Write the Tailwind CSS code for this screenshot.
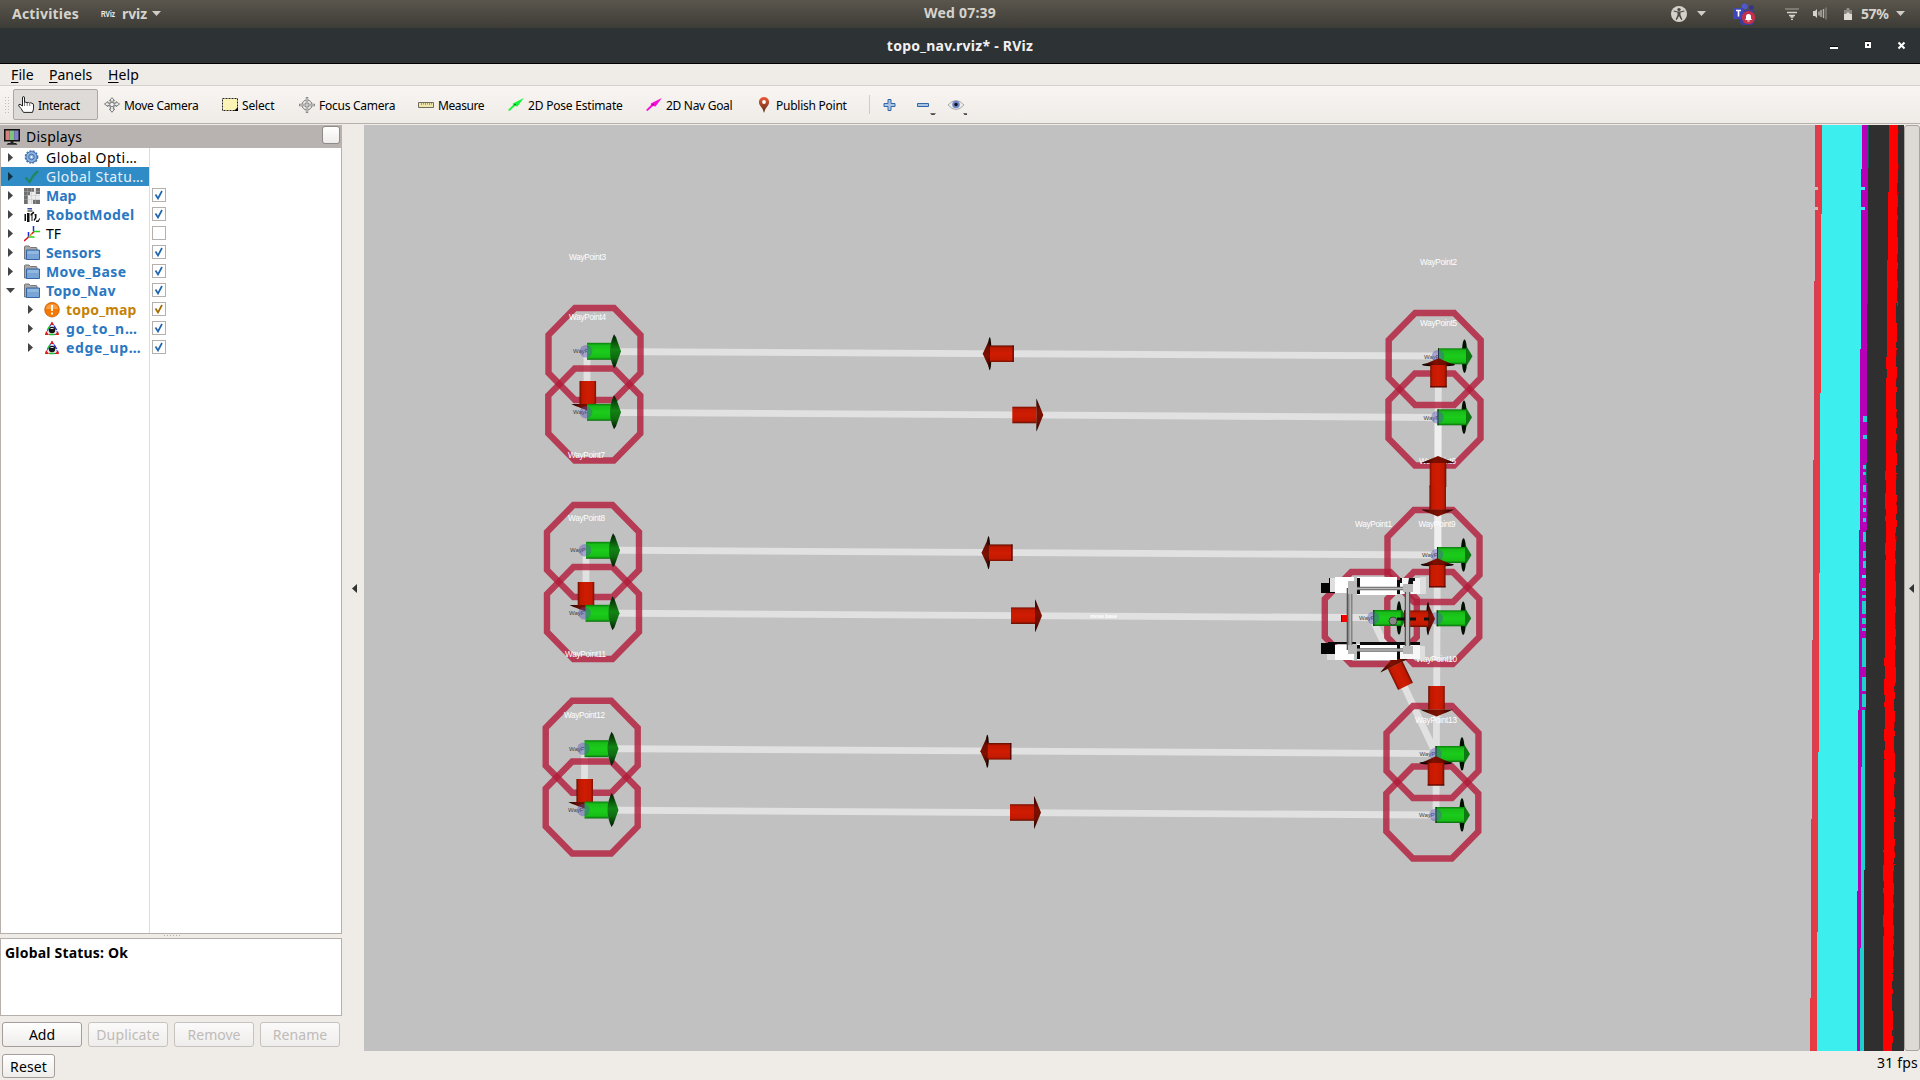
<!DOCTYPE html>
<html lang="en">
<head>
<meta charset="utf-8">
<title>topo_nav.rviz* - RViz</title>
<script src="https://cdn.jsdelivr.net/npm/@tailwindcss/browser@4"></script>
</head>
<body class="flex h-[1080px] w-[1920px] flex-col overflow-hidden bg-[#efebe7] font-['Noto_Sans',sans-serif] text-[14px] leading-none whitespace-nowrap text-black">

<!-- Desktop top bar -->
<header class="grid h-7 shrink-0 grid-cols-3 items-center bg-linear-to-b from-[#5a564d] to-[#3e3c37] text-[14px] font-bold text-[#d6d3cc]">
  <div class="flex h-7 items-center pb-px pl-3">
    <span class="w-[88px] tracking-[0.2px]">Activities</span>
    <svg class="h-3 w-[17px]" viewBox="0 0 17 12"><text x="1" y="9" font-size="9" font-family="Liberation Sans" font-weight="bold" fill="#eee" textLength="14" lengthAdjust="spacingAndGlyphs">RViz</text></svg>
    <span class="ml-[5px] w-[30px] tracking-[-0.1px]">rviz</span>
    <svg class="h-[5px] w-[9px]" viewBox="0 0 9 5"><path d="M0 0h9L4.500 5z" fill="#d0cdc6"/></svg>
  </div>
  <div class="pb-[2px] text-center tracking-[0.2px]">Wed 07:39</div>
  <div class="flex h-7 items-center justify-end pr-[15px] pb-px">
    <svg class="size-4" viewBox="0 0 16 16"><circle cx="8" cy="8" r="8" fill="#d4d1cb"/><circle cx="8" cy="3.600" r="1.700" fill="#4c4a44"/><path d="M2.500 5.500l4 .9v2.600L4.600 13.600l1.200.5L8 10l2.200 4.100 1.200-.5L9.500 9V6.400l4-.9-.2-1L9 5.600H7l-4.300-1.100z" fill="#4c4a44"/></svg>
    <svg class="ml-[10px] h-[5px] w-[9px]" viewBox="0 0 9 5"><path d="M0 0h9L4.500 5z" fill="#d0cdc6"/></svg>
    <svg class="ml-[27px] h-[22px] w-[23px]" viewBox="0 0 23 22"><circle cx="11.500" cy="3.500" r="3" fill="#5059c9"/><circle cx="18.500" cy="4.500" r="2.200" fill="#34348f"/><path d="M7 7h14v7a7 7 0 0 1-14 5z" fill="#3b3f9c"/><rect y="5" width="11" height="11" rx="1" fill="#4046b8"/><path d="M3 7.500h5M5.500 7.500v6" stroke="#fff" stroke-width="1.600"/><circle cx="15.500" cy="14.500" r="6.600" fill="#c4314b"/><path d="M12 17l1-1.500v-2a2.500 2.500 0 0 1 5 0v2l1 1.500zM14.300 17.500h2.400v1h-2.400z" fill="#fff"/></svg>
    <svg class="ml-[29px] h-3 w-[14px]" viewBox="0 0 14 12"><path d="M0 1h14" stroke="#8b8880" stroke-width="1.500"/><path d="M2 4.500h10M4 7.500h6M5.500 9h3M6 11.300h2" stroke="#d6d3cc" stroke-width="1.300"/></svg>
    <svg class="ml-[14px] h-[13px] w-[14px]" viewBox="0 0 14 13"><path d="M0 4h2l2-2v9l-2-2H0z" fill="#d6d3cc"/><path d="M6 4.500v4M8 3v7M10.500 2v9" stroke="#b5b2ab" stroke-width="1.400"/><path d="M13 .5v12" stroke="#999690"/></svg>
    <svg class="ml-[17px] h-3 w-2" viewBox="0 0 8 12"><path d="M2.500 0h3v2H8v4H0V2h2.500z" fill="#8e8b84"/><path d="M0 6h2l2-2 2 2h2v6H0z" fill="#dedbd5"/></svg>
    <span class="ml-[9px] w-[35px] tracking-[-0.4px]">57%</span>
    <svg class="h-[5px] w-[9px]" viewBox="0 0 9 5"><path d="M0 0h9L4.500 5z" fill="#d0cdc6"/></svg>
  </div>
</header>

<!-- Window title bar -->
<div class="grid h-9 shrink-0 grid-cols-3 items-center border-b border-black bg-[#2d3235] font-bold text-[#f1f1f1]">
  <span></span>
  <span class="text-center text-[14px] tracking-[0.25px]">topo_nav.rviz* - RViz</span>
  <svg class="mr-[14px] h-[9px] w-[76px] justify-self-end" viewBox="0 0 76 9" shape-rendering="crispEdges"><path d="M0 6h8v2H0z" fill="#fff"/><path d="M0 5h8v1H0zM35 0h6v1h-6z" fill="#0b0c0d"/><path d="M35 1h6v6h-6zm2 2v2h2V3z" fill="#fff" fill-rule="evenodd"/><path d="M68.500 1.500l6 6M74.500 1.500l-6 6" stroke="#fff" stroke-width="2" shape-rendering="auto"/></svg>
</div>

<!-- Menu -->
<nav class="flex h-[22px] shrink-0 items-center border-b border-[#d5d1cd] pl-[11px] text-[14px]">
  <span class="w-[38px] tracking-[0.1px]"><u class="underline-offset-2">F</u>ile</span>
  <span class="w-[59px] tracking-[0px]"><u class="underline-offset-2">P</u>anels</span>
  <span class="tracking-[0.15px]"><u class="underline-offset-2">H</u>elp</span>
</nav>

<!-- Toolbar -->
<div class="flex h-[38px] shrink-0 items-center border-b border-[#b5b0ac] bg-linear-to-b from-[#f8f5f2] to-[#efebe7] text-[12px]">
  <svg class="ml-1 h-[18px] w-[9px]" viewBox="0 0 9 18"><path d="M1.500 1v17M4.500 1v17" stroke="#c2beba" stroke-dasharray="1 2"/></svg>
  <div class="flex h-[31px] w-[85px] items-center rounded-[2px] border border-[#aca7a4] bg-[#dddad7] pl-1">
    <svg class="mr-[4px] h-[17px] w-4" viewBox="0 0 16 17"><path d="M4.500 10V2q0-1.500 1-1.500t1 1.500v4.500q1.500-1 2.500.3 1.500-1 2.500.3 1.500-1 2.500.3 1.500 0 1.500 1.500v4l-1 3.500h-9L3 12.500.8 10Q.2 8.300 2 8.300z" fill="#fff" stroke="#222"/><path d="M6.500 6.500V10M9.200 7v3M11.700 7.500V10" stroke="#555" stroke-width=".8"/></svg>
    <span class="pt-[2px] tracking-[-0.3px]">Interact</span>
  </div>
  <div class="ml-[6px] flex w-[118px] items-center">
    <svg class="mr-1 size-4" viewBox="0 0 16 16" fill="#eee" stroke="#6d6d6d" stroke-width=".9"><path d="M8 .7l2.600 3H9v2.500h3V4.600L15.500 7 12 9.600V8.200L10 9l-.8 3h1.500L8 15.300 5.300 12h1.500L6 9l-2-.8v1.400L.5 7 4 4.600v1.600h3V3.700H5.400z"/><circle cx="8" cy="7.500" r="2.300"/></svg>
    <span class="pt-[2px] tracking-[-0.3px]">Move Camera</span>
  </div>
  <div class="flex w-[77px] items-center">
    <svg class="mr-1 h-[13px] w-4" viewBox="0 0 16 13"><path d="M.5.5h15v12H.5z" fill="#fcf4b4" stroke="#222" stroke-dasharray="2 1"/><path d="M16 9v4h-4z"/></svg>
    <span class="pt-[2px] tracking-[-0.15px]">Select</span>
  </div>
  <div class="flex w-[119px] items-center">
    <svg class="mr-1 size-4" viewBox="0 0 16 16" fill="none" stroke="#777"><circle cx="8" cy="8" r="5"/><circle cx="8" cy="8" r="2.200"/><path d="M8 0v16M0 8h16" stroke="#888" stroke-width="2.400"/><path d="M8 1v14M1 8h14" stroke="#eee" stroke-width=".8"/></svg>
    <span class="pt-[2px] tracking-[-0.25px]">Focus Camera</span>
  </div>
  <div class="flex w-[90px] items-center">
    <svg class="mr-1 h-[6px] w-4" viewBox="0 0 16 6"><path d="M.5.5h15v5H.5z" fill="#f0e5ac" stroke="#6f6b5e"/><path d="M3.500 1v2M5.500 1v1.500M7.500 1v2M9.500 1v1.500M11.500 1v2M13.500 1v1.500" stroke="#8a8468" stroke-width=".8"/></svg>
    <span class="pt-[2px] tracking-[-0.4px]">Measure</span>
  </div>
  <div class="flex w-[138px] items-center">
    <svg class="mr-1 h-[13px] w-4" viewBox="0 0 16 13"><path d="M0 12L5 7l-.2-1.500L15.800 0 9.500 8.500 7 8 1.500 13z" fill="#18f43c"/><path d="M6 7l2-.7" stroke="#08781c"/></svg>
    <span class="pt-[2px] tracking-[-0.2px]">2D Pose Estimate</span>
  </div>
  <div class="flex w-[112px] items-center">
    <svg class="mr-1 h-[13px] w-4" viewBox="0 0 16 13"><path d="M0 12L5 7l-.2-1.500L15.800 0 9.500 8.500 7 8 1.500 13z" fill="#fb08da"/><path d="M6 7l2-.7" stroke="#8c0878"/></svg>
    <span class="pt-[2px] tracking-[-0.3px]">2D Nav Goal</span>
  </div>
  <div class="flex w-[111px] items-center">
    <svg class="mr-[6px] h-4 w-3" viewBox="0 0 12 16"><defs><linearGradient id="pin" x2="0" y2="1"><stop stop-color="#ee5a38"/><stop offset="1" stop-color="#4f2e16"/></linearGradient></defs><path d="M6 16Q5 11.500 2.200 8.800.9 7 .9 5a5.100 5 0 0 1 10.200 0q0 2-1.300 3.800Q7 11.500 6 16z" fill="url(#pin)"/><circle cx="6" cy="5" r="1.900" fill="#fff"/></svg>
    <span class="pt-[2px] tracking-[-0.25px]">Publish Point</span>
  </div>
  <div class="h-[19px] w-[14px] border-l border-[#cfcbc7]"></div>
  <svg class="h-5 w-[84px]" viewBox="0 0 84 20"><path d="M5 4.500h3v4h4v3H8v4H5v-4H1v-3h4z" fill="#a9c5e6" stroke="#3465a4"/><path d="M34.500 8.500h11v3h-11z" fill="#a9c5e6" stroke="#3465a4"/><path d="M47 18h6l-3 3zM80 18h6l-3 3z" fill="#444" transform="translate(0 .3)"/><path d="M65 10q8-9 16 0-8 9-16 0z" fill="#eee" stroke="#aaa"/><circle cx="73" cy="9.500" r="3.800" fill="#6d87c6"/><circle cx="73" cy="9.500" r="1.700" fill="#111"/></svg>
</div>

<main class="flex h-[927px] shrink-0 pt-px">
  <!-- Displays panel -->
  <aside class="flex w-[342px] shrink-0 flex-col">
    <div class="flex h-[23px] shrink-0 items-center bg-[#b8b3b0] pr-[2px] pl-1">
      <svg class="mr-[6px] h-4 w-4" viewBox="0 0 16 16"><path d="M0 0h16v12.500H0z" fill="#111"/><path d="M1.500 1.500h4.300V11H1.500z" fill="#d58080"/><path d="M5.800 1.500h4.400V11H5.800z" fill="#7cc380"/><path d="M10.200 1.500h4.300V11h-4.300z" fill="#8480c8"/><path d="M6.500 12h3v2h2.500l1.500 1.800h-11L4 14h2.500z" fill="#222"/></svg>
      <span class="tracking-[0.2px]">Displays</span>
      <span class="mb-[3px] ml-auto size-[18px] rounded-[3px] border border-[#8f8a87] bg-linear-to-b from-white to-[#efedeb]"></span>
    </div>
    <div id="tree" class="h-[786px] shrink-0 border border-t-0 border-[#b5b0ac] bg-[linear-gradient(to_right,white_148px,#dcdcdc_148px,#dcdcdc_149px,white_149px)]"></div>
    <svg class="h-1 w-[342px] shrink-0" viewBox="0 0 342 4"><path d="M164 1.500h17" stroke="#b5b0ac" stroke-dasharray="1 2"/></svg>
    <div class="h-[78px] shrink-0 border border-[#b5b0ac] bg-white px-1 pt-[7px] text-[14px] font-bold tracking-[0.2px]">Global Status: Ok</div>
    <div class="flex gap-[6px] pt-[6px] pl-[2px] text-[14px] text-[#bebbb8]">
      <span class="flex h-[25px] w-20 items-center justify-center rounded-[3px] border border-[#a39e9a] bg-linear-to-b from-white to-[#efedeb] text-black">Add</span>
      <span class="flex h-[25px] w-20 items-center justify-center rounded-[3px] border border-[#c6c2be] bg-linear-to-b from-[#fbfafa] to-[#efedeb] tracking-[0.15px]">Duplicate</span>
      <span class="flex h-[25px] w-20 items-center justify-center rounded-[3px] border border-[#c6c2be] bg-linear-to-b from-[#fbfafa] to-[#efedeb]">Remove</span>
      <span class="flex h-[25px] w-20 items-center justify-center rounded-[3px] border border-[#c6c2be] bg-linear-to-b from-[#fbfafa] to-[#efedeb] tracking-[0.1px]">Rename</span>
    </div>
  </aside>
  <div class="flex w-[22px] shrink-0 items-center justify-center pl-[3px]"><svg class="h-[9px] w-[5px]" viewBox="0 0 5 9"><path d="M5 0v9L0 4.500z" fill="#333"/></svg></div>

  <!-- 3D view, drawn in window coordinates -->
  <svg class="h-[926px] w-[1540px] shrink-0" viewBox="364 125 1540 926">
    <defs>
      <path id="oct" d="M-19.500-46h39l26.500 27v38l-26.500 27h-39l-26.500-27v-38z" fill="none" stroke="#b21a38" stroke-opacity=".8" stroke-width="6.400"/>
      <linearGradient id="gb" x2="0" y2="1"><stop stop-color="#0b7d0d"/><stop offset=".15" stop-color="#19bd19"/><stop offset=".5" stop-color="#1bcc1b"/><stop offset=".85" stop-color="#17be17"/><stop offset="1" stop-color="#0a6a0c"/></linearGradient>
      <linearGradient id="rb" x2="0" y2="1"><stop stop-color="#7a1000"/><stop offset=".15" stop-color="#c41a02"/><stop offset=".5" stop-color="#cf1c02"/><stop offset=".85" stop-color="#c01800"/><stop offset="1" stop-color="#601000"/></linearGradient>
      <linearGradient id="gc" x2="0" y2="1"><stop stop-color="#021a03"/><stop offset=".45" stop-color="#128414"/><stop offset=".7" stop-color="#0e6a10"/><stop offset="1" stop-color="#011002"/></linearGradient>
      <linearGradient id="rc" x2="0" y2="1"><stop stop-color="#200400"/><stop offset=".4" stop-color="#801000"/><stop offset=".7" stop-color="#6e0e00"/><stop offset="1" stop-color="#180200"/></linearGradient>
      <g id="gl"><path d="M0-8.500h24v17H0z" fill="url(#gb)"/><path d="M27-17q-8 17 0 34l2-3 5-14-5-14z" fill="url(#gc)"/><circle cx="-1" r="6.300" fill="#5050b0" fill-opacity=".42"/></g>
      <g id="gr"><ellipse cx="26.500" rx="2.800" ry="16.700" fill="#021002"/><path d="M0-8h28.500V8H0z" fill="url(#gb)"/><path d="M28.500-10L34.500 0l-6 10z" fill="#0c7a10"/><path d="M.5-8v16" stroke="#052005"/><circle r="6.300" fill="#5050b0" fill-opacity=".42"/></g>
      <g id="rr"><path d="M0-8.300h24v16.600H0z" fill="url(#rb)"/><path d="M24-16.500Q25-15 31 0 25 15 24 16.500z" fill="url(#rc)"/></g>
      <g id="rl"><ellipse cx="24" rx="1.800" ry="16.500" fill="#100500"/><path d="M0-8.300h24v16.600H0z" fill="url(#rb)"/><path d="M24-15L31 0l-7 15z" fill="url(#rc)"/><path d="M.5-8.300V8.300" stroke="#300"/></g>
    </defs>
    <path d="M364 125h1540v926H364z" fill="#c1c1c1"/>

    <g fill="none" stroke="#e1e1e1" stroke-width="6.800">
      <path d="M587 351.500L1438 356M587 412.300L1438 417.500M586 550L1437 555M586 613L1437 618M585 748.500L1436 753.600M585 810L1436 815"/>
      <path d="M587 351v61M586 550v63M584.500 748v62M1438.500 356L1436 815M1372 618l64 136"/>
    </g>
    <path d="M1438 417v138" stroke="#efefef" stroke-width="6.800"/>

    <use href="#oct" x="594.500" y="354"/><use href="#oct" x="594.300" y="414.500"/>
    <use href="#oct" x="593" y="551"/><use href="#oct" x="593" y="613"/>
    <use href="#oct" x="591.700" y="746.700"/><use href="#oct" x="591.700" y="807.500"/>
    <use href="#oct" x="1434.700" y="359"/><use href="#oct" x="1434.500" y="419.500"/>
    <use href="#oct" x="1433.500" y="556"/><use href="#oct" x="1433.300" y="618"/>
    <use href="#oct" x="1432.500" y="752"/><use href="#oct" x="1432.300" y="812.500"/>
    <use href="#oct" x="1370.800" y="618"/>

    <g font-family="Liberation Sans" font-size="8.200" fill="#fff">
      <text x="569" y="259.700" textLength="37">WayPoint3</text><text x="569" y="320.300" textLength="37">WayPoint4</text><text x="568" y="458.300" textLength="37">WayPoint7</text>
      <text x="568" y="521.300" textLength="37">WayPoint8</text><text x="565" y="657" textLength="41">WayPoint11</text><text x="564" y="717.700" textLength="41">WayPoint12</text>
      <text x="1420" y="265" textLength="37">WayPoint2</text><text x="1420" y="326" textLength="37">WayPoint5</text><text x="1419" y="464" textLength="37">WayPoint6</text>
      <text x="1355" y="526.500" textLength="37">WayPoint1</text><text x="1418.500" y="526.700" textLength="37">WayPoint9</text><text x="1416" y="662" textLength="41">WayPoint10</text><text x="1415" y="723.300" textLength="42">WayPoint13</text>
      <text x="1090" y="618" font-size="5.500" font-weight="bold" textLength="27">move base</text>
    </g>
    <g font-family="Liberation Sans" font-size="6" fill="#444">
      <text x="573" y="353">WayP</text><text x="573" y="414">WayP</text><text x="570" y="552">WayP</text><text x="569" y="615">WayP</text><text x="569" y="750.500">WayP</text><text x="568" y="812">WayP</text>
      <text x="1424" y="358.500">WayP</text><text x="1423.500" y="419.500">WayP</text><text x="1422" y="557">WayP</text><text x="1419.500" y="756">WayP</text><text x="1419" y="817">WayP</text><text x="1359" y="620">WayP</text>
    </g>

    <use href="#rr" transform="translate(587.800 381) rotate(90) scale(.96 1)"/>
    <use href="#rr" transform="translate(586 582) rotate(90) scale(.96 1)"/>
    <use href="#rr" transform="translate(584.700 779) rotate(90) scale(.96 1)"/>
    <use href="#gl" x="587" y="351.300"/><use href="#gl" x="587" y="412.300"/>
    <use href="#gl" x="586" y="550.300"/><use href="#gl" x="585.500" y="613.300"/>
    <use href="#gl" x="584.500" y="748.700"/><use href="#gl" x="584.500" y="810"/>
    <use href="#gr" transform="translate(1438 356.300)"/><use href="#gr" transform="translate(1437.500 417.300)"/>
    <use href="#gr" transform="translate(1437 555)"/><use href="#gr" transform="translate(1436.700 618.300)"/>
    <use href="#gr" transform="translate(1435.500 754)"/><use href="#gr" transform="translate(1435.500 815)"/>
    <use href="#gr" transform="translate(1373.300 618) scale(.97 1)"/>

    <use href="#rl" transform="translate(1013.700 353.700) rotate(180)"/><use href="#rr" x="1012.300" y="415"/>
    <use href="#rl" transform="translate(1012.500 552.700) rotate(180)"/><use href="#rr" x="1011" y="615.700"/>
    <use href="#rl" transform="translate(1011.300 751.300) rotate(180)"/><use href="#rr" x="1010" y="812.500"/>
    <use href="#rl" transform="translate(1438.500 387.300) rotate(-90) scale(.94 1)"/>
    <use href="#rl" transform="translate(1437.300 587.300) rotate(-90) scale(.94 1)"/>
    <use href="#rl" transform="translate(1436 785.500) rotate(-90) scale(.94 1)"/>
    <use href="#rr" transform="translate(1438 487) rotate(-90)"/>
    <use href="#rr" transform="translate(1437.700 485.500) rotate(90)"/>
    <use href="#rr" transform="translate(1436.500 686) rotate(90) scale(.98 1)"/>
    <use href="#rr" transform="translate(1405.500 686.300) rotate(-116) scale(.98 1)"/>
    <use href="#rl" transform="translate(1404 618.700)"/>

    <!-- Robot -->
    <g>
      <path d="M1321 583h8v-5h6v15h-14zM1321 643h14v11h-14z" fill="#050505"/>
      <path d="M1335 577h19v16h-19zM1357 577h40v18h-40zM1357 644h40v16h-40zM1335 645h19v15h-19z" fill="#fff"/>
      <path d="M1357 578h3v16h-3zM1397 580h3v14h-3zM1357 645h3v14h-3zM1397 644h3v15h-3zM1328 642h28v2h-28zM1360 642h60v3h-60z" fill="#0a0a0a"/>
      <path d="M1400 578h20v16h-20zM1400 645h20v14h-20z" fill="#f6f6f6"/><path d="M1420 577h6v17h-6zM1420 646h5v14h-5zM1330 578h5v14h-5zM1327 654h8v6h-8z" fill="#dedede"/>
      <path d="M1354 588.500h54M1354 650h54" stroke="#666" stroke-width="3.600"/><path d="M1354 588.500h54M1354 650h54" stroke="#bbb" stroke-width="1.600"/>
      <path d="M1349.500 588v62M1407.500 592v55" stroke="#555" stroke-width="5.600"/><path d="M1350 588v62M1407.500 592v55" stroke="#b6b6b6" stroke-width="3"/><path d="M1349 588v62" stroke="#888" stroke-width=".8"/>
      <path d="M1348 581h9v13h-9zM1348 645h9v9h-9zM1403 584h10v8h-10zM1403 646h10v8h-10z" fill="#b9b9b9"/>
      <path d="M1409 578h6v3h-2v3h-5zM1400 578h2v5h-2z" fill="#111"/>
      <path d="M1341 615h6v7h-6z" fill="#f00400"/><path d="M1341 615h1v7h-1z" fill="#611"/>
      <circle cx="1393" cy="621" r="4" fill="#888" stroke="#333" stroke-width=".8"/><path d="M1397 619h8M1410 619h6M1424 619h5" stroke="#111" stroke-width="3"/>
    </g>

    <!-- Costmap bands along the wall -->
    <g shape-rendering="crispEdges">
      <path d="M1866 125h38v926h-41V870h1V710h1V530h1z" fill="#2f2f2f"/>
      <path d="M1815 125h7v89h-1v179h-1v180h-1v179h-1v180h-1v119h-7v-53h1V819h1V640h1V460h1V281h1z" fill="#e83a42"/>
      <path d="M1815 125h3v156h-1v179h-1v180h-1v179h-1v179h-3V819h1V640h1V460h1V281h1z" fill="#d63e54"/>
      <path d="M1822 125h40v44h-1v180h-1v181h-1v180h-1v181h-1v160h-40V932h1V752h1V573h1V393h1V214h1z" fill="#3cefee"/>
      <path d="M1862 125h6v156h-1v249h-1v180h-4v57h-1v181h-1v103h-3V891h1V710h1V530h1V349h1V169h1z" fill="#b500b8"/>
      <path d="M1862 710h3v160h-1v181h-4V948h1V767h1z" fill="#1fd0d0"/>
      <path d="M1815 187h3v3h-3zM1815 207h3v3h-3z" fill="#c1c1c1"/>
      <path d="M1861 187h4v3h-4zM1861 207h4v3h-4zM1862 575h4v3h-4z" fill="#3cefee"/>
      <path d="M1863 416h4v6h-4zM1863 435h4v4h-4zM1863 465h3v4h-3zM1863 472h3v3h-3zM1863 485h3v7h-3zM1863 498h3v7h-3zM1863 508h3v4h-3zM1863 518h3v4h-3zM1863 532h3v10h-3zM1863 551h3v7h-3zM1863 561h3v7h-3zM1862 588h4v3h-4zM1862 595h4v3h-4zM1862 601h4v13h-4zM1862 618h4v6h-4zM1862 628h4v3h-4zM1862 638h4v29h-4zM1862 677h4v14h-4zM1862 694h4v13h-4z" fill="#1fd0d0"/>
      <path d="M1868 125v43M1867 281v23M1866 463v20" stroke="#14594f"/>
      <path d="M1889 125h9v58h-1v120h-1v230h-1v150h-1v180h-1v110h-1v78h-9V940h1V760h1V560h1V380h1V260h1v-68h1z" fill="#f00"/>
      <g fill="none" stroke="#f00" stroke-width="1">
        <path d="M1888.500 192l-1 110-1 80-1 180-1 200-1 180-.5 100" stroke-dasharray="9 13 16 7 5 22 12 9"/>
        <path d="M1897.500 195l-.5 120-1 220-1 150-1 180-1 110-1 70" stroke-dasharray="12 8 5 17 19 6 7 12"/>
      </g>
      <path d="M1898.500 130l-1.500 200-1 240-1 120-1 180-1 180" fill="none" stroke="#8d1010" stroke-dasharray="3 31 6 22"/>
    </g>
  </svg>
  <div class="flex w-4 shrink-0 items-center rounded-[3px] border border-[#a9a4a0] bg-[#dddad6] pl-1"><svg class="h-[9px] w-[5px]" viewBox="0 0 5 9"><path d="M5 0v9L0 4.500z" fill="#333"/></svg></div>
</main>

<footer class="flex h-[29px] shrink-0 items-start justify-between pl-[2px]">
  <span class="mt-[3px] flex h-6 w-[53px] items-center justify-center rounded-[3px] border border-[#a39e9a] bg-linear-to-b from-white to-[#efedeb] pt-px tracking-[0.1px]">Reset</span>
  <span class="pt-[5px] pr-[2px] tracking-[0.2px]">31 fps</span>
</footer>

<template id="ic-gear"><svg class="size-4 shrink-0" viewBox="0 0 16 16"><circle cx="7.500" cy="7" r="5.500" fill="#8fb3de" stroke="#3f72b0"/><circle cx="7.500" cy="7" r="6.200" fill="none" stroke="#3f72b0" stroke-width="1.300" stroke-dasharray="2 1.300"/><circle cx="7.500" cy="7" r="2.800" fill="none" stroke="#3f72b0"/><circle cx="7.500" cy="7" r="1" fill="#fff"/></svg></template>
<template id="ic-check"><svg class="size-4 shrink-0" viewBox="0 0 16 16"><path d="M1.500 8.500l4 4.500Q8.500 6.500 14 2" fill="none" stroke="#1f8760" stroke-width="2.300"/></svg></template>
<template id="ic-map"><svg class="size-4 shrink-0" viewBox="0 0 16 16"><path d="M0 0h16v16H0z" fill="#ececec"/><path d="M0 0h10v4H6v3H4v9H0zM12 0h4v6h-4zM9 12h7v4H9z" fill="#707070"/><path d="M0 3.500h16M0 7.500h16M0 11.500h16M3.500 0v16M7.500 0v16M11.500 0v16" stroke="#bbb" stroke-width=".4"/></svg></template>
<template id="ic-robot"><svg class="size-4 shrink-0" viewBox="0 0 16 16"><path d="M3.500 1h4.500v1.500H3.500z" fill="#3a4aa0"/><path d="M3.500 3.500h5v1h-5zM.5 7h1.500v7H.5zM3 6h2.500v9H3zM6.500 7l3-2.500 1 1.500-2 1.500V14h-1V8.500H6.500zM10.500 7h2v4l-2 3-1-1 1.500-2.500zM12 13.500h2l1.500-2.500.5 1-1.500 3H12z" fill="#111"/></svg></template>
<template id="ic-tf"><svg class="size-4 shrink-0" viewBox="0 0 16 16" fill="none" stroke-width="1.500"><path d="M4.500 11V6M9.500 5V0" stroke="#1c2ce0"/><path d="M4.500 11h6M10 5.500h6" stroke="#20d820"/><path d="M4.500 11L0 15M10 5.500L6 9.500" stroke="#d81010"/><path d="M5 10.500l3-3" stroke="#e0b020"/></svg></template>
<template id="ic-folder"><svg class="size-4 shrink-0" viewBox="0 0 16 16"><path d="M.5 14V2q0-1 1-1H5l1.500 1.500H12q1 0 1 1V14z" fill="#a9aaa8" stroke="#777"/><path d="M2.500 5h13v9.500h-13z" fill="#79a5d6" stroke="#3465a4"/><path d="M3.500 6h11v3h-11z" fill="#93b8e0"/></svg></template>
<template id="ic-warn"><svg class="size-4 shrink-0" viewBox="0 0 16 16"><circle cx="8" cy="7.700" r="7.300" fill="#f57900" stroke="#c86008" stroke-width=".8"/><path d="M2 7a6 5 0 0 1 12 0z" fill="#fa9d44"/><path d="M8 3v6M8 10.500v2" stroke="#fff" stroke-width="1.900"/></svg></template>
<template id="ic-tri"><svg class="size-4 shrink-0" viewBox="0 0 16 16"><path d="M8 1.500L14.500 13.500h-13z" fill="#e8e8e8" stroke="#3a3ae0" stroke-dasharray="3 2"/><path d="M6 4h4L8 .5zM1 14l1-4 3 4zM15 14l-1-4-3 4z" fill="#e01818"/><path d="M3.300 9L6 4.500M5.500 13.500h5" stroke="#18c828" stroke-width="1.400"/><path d="M10 4.500L12.700 9" stroke="#2a2ae0" stroke-width="1.400"/><circle cx="8" cy="9" r="3.200" fill="#151515"/><path d="M6.500 7.500h3" stroke="#ddd"/></svg></template>

<script>
const rows = [
  ['Global Opti…', 'gear', 'text-black tracking-[0.5px]', ''],
  ['Global Statu…', 'check', 'text-[#e6f0f8] tracking-[0.5px]', '', true],
  ['Map', 'map', 'font-bold text-[#2a77c2]', 'on'],
  ['RobotModel', 'robot', 'font-bold text-[#2a77c2] tracking-[0.35px]', 'on'],
  ['TF', 'tf', 'text-black', 'off'],
  ['Sensors', 'folder', 'font-bold text-[#2a77c2] tracking-[0.15px]', 'on'],
  ['Move_Base', 'folder', 'font-bold text-[#2a77c2] tracking-[0.4px]', 'on'],
  ['Topo_Nav', 'folder', 'font-bold text-[#2a77c2] tracking-[0.35px]', 'on', false, 'open'],
  ['topo_map', 'warn', 'font-bold text-[#c48207] tracking-[0.2px]', 'warn', false, 'child'],
  ['go_to_n…', 'tri', 'font-bold text-[#2a77c2] tracking-[0.85px]', 'on', false, 'child'],
  ['edge_up…', 'tri', 'font-bold text-[#2a77c2] tracking-[0.65px]', 'on', false, 'child'],
];
document.getElementById('tree').innerHTML = rows.map(([name, icon, cls, check, selected, kind]) => {
  const arrow = kind === 'open'
    ? '<svg class="mr-[9px] -ml-[2px] h-[5px] w-[9px] shrink-0" viewBox="0 0 9 5"><path d="M0 0h9L4.500 5z" fill="#444"/></svg>'
    : `<svg class="mr-[11px] h-[9px] w-[5px] shrink-0" viewBox="0 0 5 9"><path d="M0 0v9l5-4.500z" fill="${selected ? '#12303f' : '#444'}"/></svg>`;
  const box = check
    ? `<span class="mb-px ml-[3px] flex size-[14px] items-center justify-center border border-[#b5b0ac] bg-white">${check === 'off' ? '' : `<svg class="size-[10px]" viewBox="0 0 10 10"><path d="M1.500 4.500l2.500 4 4-7.500" fill="none" stroke="${check === 'warn' ? '#a36a00' : '#1f66b0'}" stroke-width="1.700"/></svg>`}</span>`
    : '';
  return `<div class="flex h-[19px] items-center"><div class="flex h-[19px] w-[148px] items-center ${kind === 'child' ? 'pl-[27px]' : 'pl-[7px]'} ${selected ? 'bg-[#308cc6]' : ''}">${arrow}${document.getElementById('ic-' + icon).innerHTML}<span class="ml-[6px] ${cls}">${name}</span></div>${box}</div>`;
}).join('');
</script>
</body>
</html>
